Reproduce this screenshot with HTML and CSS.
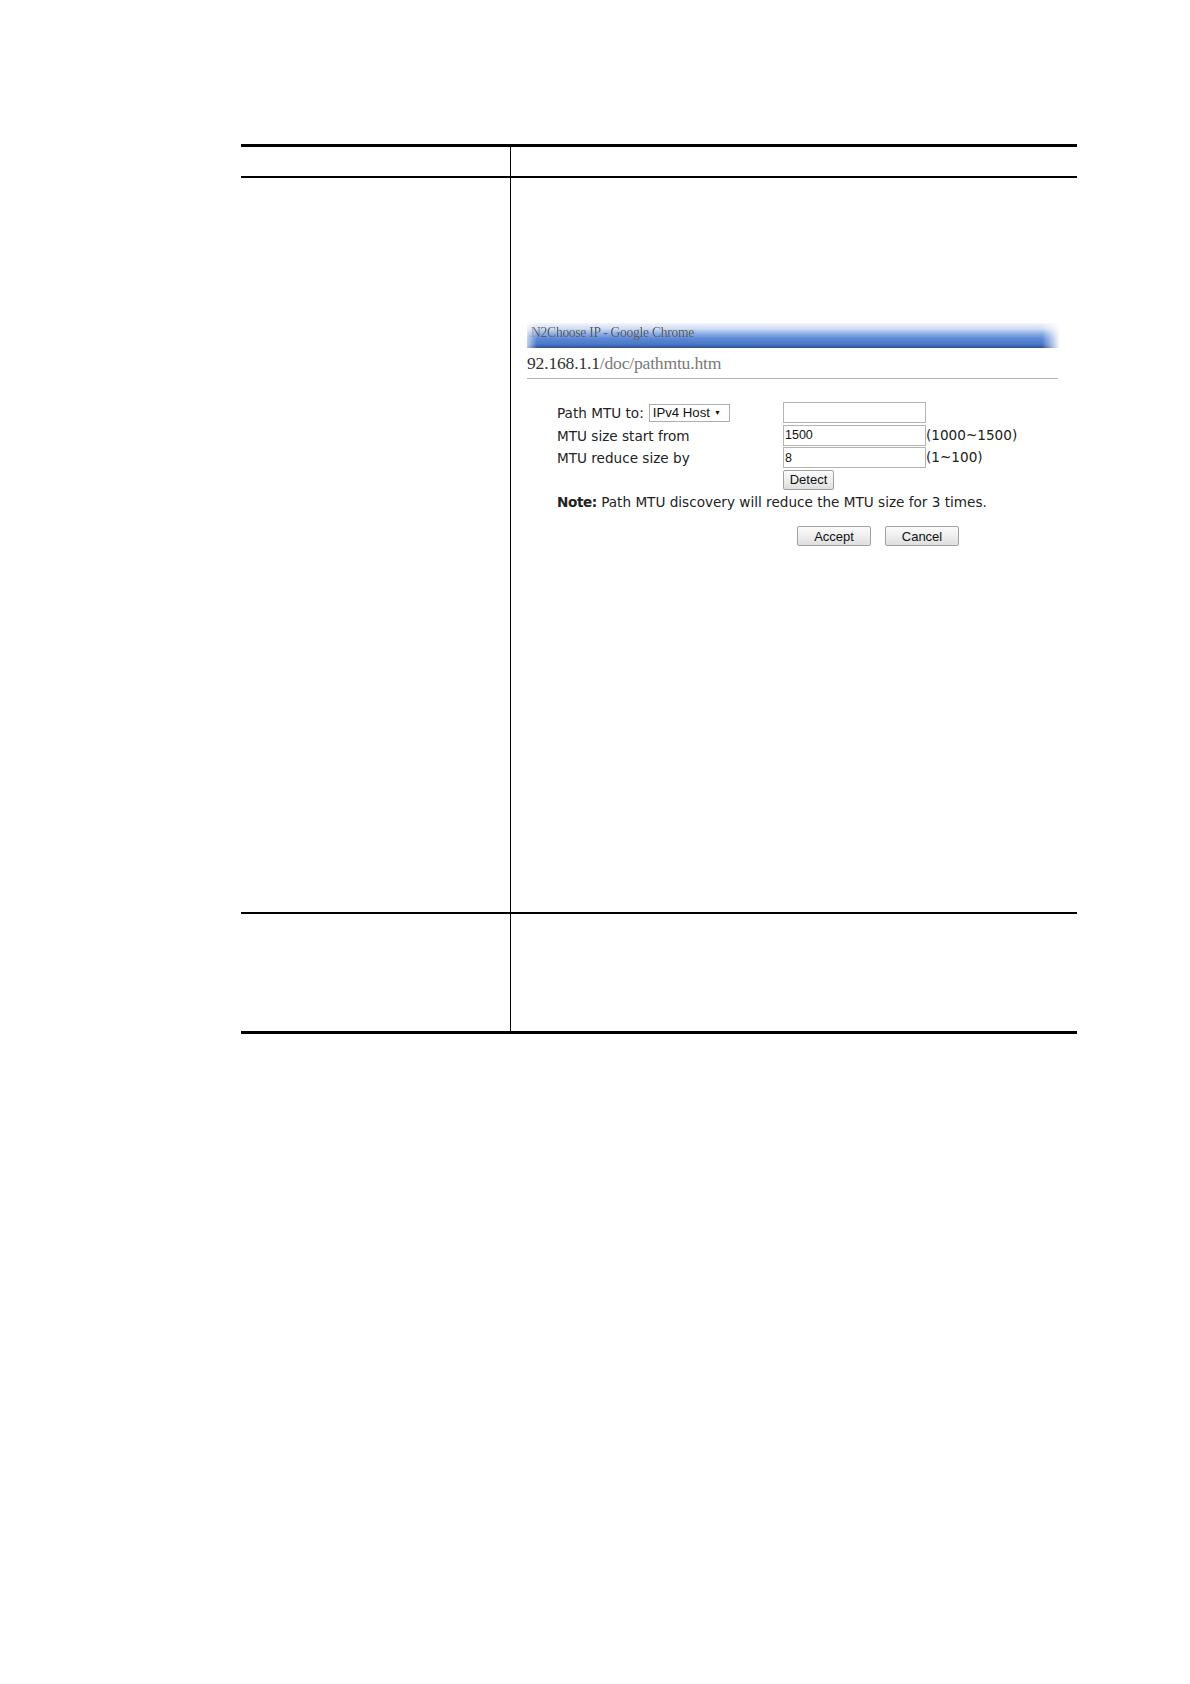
FILE: index.html
```html
<!DOCTYPE html>
<html>
<head>
<meta charset="utf-8">
<title>Path MTU</title>
<link rel="stylesheet" href="styles.css">
</head>
<body>
<div class="page">
  <div class="doc-table">
    <div class="row head">
      <div class="cell left"></div>
      <div class="cell right"></div>
    </div>
    <div class="row body1">
      <div class="cell left"></div>
      <div class="cell right">
        <div class="shot">
          <div class="titlebar"><span class="title">.N2Choose IP - Google Chrome</span></div>
          <div class="urlbar"><span class="host">92.168.1.1</span><span class="path">/doc/pathmtu.htm</span></div>
          <div class="form">
            <div class="grid">
              <div class="label">Path MTU to: <span class="select">IPv4 Host <span class="arrow">&#9660;</span></span></div>
              <div class="field"><span class="input"></span></div>
              <div class="suffix"></div>

              <div class="label">MTU size start from</div>
              <div class="field"><span class="input">1500</span></div>
              <div class="suffix">(1000~1500)</div>

              <div class="label">MTU reduce size by</div>
              <div class="field"><span class="input">8</span></div>
              <div class="suffix">(1~100)</div>

              <div class="label"></div>
              <div class="field"><span class="btn detect">Detect</span></div>
              <div class="suffix"></div>
            </div>
            <div class="note"><b>Note:</b> Path MTU discovery will reduce the MTU size for 3 times.</div>
            <div class="actions">
              <span class="btn action">Accept</span>
              <span class="btn action">Cancel</span>
            </div>
          </div>
        </div>
      </div>
    </div>
    <div class="row body2">
      <div class="cell left"></div>
      <div class="cell right"></div>
    </div>
  </div>
</div>
</body>
</html>
```

FILE: styles.css
```css
html, body {
  margin: 0;
  padding: 0;
  background: #ffffff;
}

.page {
  width: 1190px;
  min-height: 1684px;
  padding-top: 144px;
  padding-left: 241px;
  box-sizing: border-box;
}

.doc-table {
  width: 836px;
  border-top: 3px solid #000;
  border-bottom: 3px solid #000;
}

.row {
  display: grid;
  grid-template-columns: 270px 1fr;
}

.row.head {
  height: 29px;
  border-bottom: 2px solid #000;
}

.row.body1 {
  height: 734px;
  border-bottom: 2px solid #000;
}

.row.body2 {
  height: 117px;
}

.cell.left {
  border-right: 1px solid #000;
}

.cell.right {
  min-width: 0;
}

/* embedded screenshot */
.shot {
  margin-top: 145px;
  margin-left: 16px;
  width: 533px;
}

.titlebar {
  height: 25px;
  background: linear-gradient(to bottom, #f2f5fb 0%, #d3def3 22%, #8fb0e6 42%, #5d89d7 62%, #4a77c8 85%, #2f5090 100%);
  -webkit-mask-image: linear-gradient(to right, rgba(0,0,0,0.35) 0, #000 10px, #000 calc(100% - 18px), rgba(0,0,0,0) 100%);
  mask-image: linear-gradient(to right, rgba(0,0,0,0.35) 0, #000 10px, #000 calc(100% - 18px), rgba(0,0,0,0) 100%);
  display: flex;
  align-items: flex-start;
}

.title {
  font-family: "Liberation Serif", "DejaVu Serif", serif;
  font-size: 13.6px;
  letter-spacing: -0.3px;
  line-height: 14px;
  color: #5e5e5e;
  padding-top: 3px;
  padding-left: 1px;
}

.urlbar {
  height: 30px;
  border-bottom: 1px solid #b4b4b4;
  font-family: "Liberation Serif", "DejaVu Serif", serif;
  font-size: 17.6px;
  line-height: 30px;
  letter-spacing: -0.2px;
  width: 531px;
}

.host {
  color: #333;
}

.path {
  color: #7a7a7a;
}

.form {
  padding-top: 23px;
  padding-left: 30px;
  font-family: "DejaVu Sans", Verdana, sans-serif;
  font-size: 13.6px;
  color: #222;
}

.grid {
  display: grid;
  grid-template-columns: 226px 143px auto;
  grid-auto-rows: 22.5px;
}

.label {
  display: flex;
  align-items: center;
  line-height: 16px;
  white-space: nowrap;
}

.select {
  display: inline-flex;
  align-items: center;
  height: 16px;
  width: 76px;
  margin-left: 5px;
  padding-left: 3px;
  border: 1px solid #adadad;
  font-family: "Liberation Sans", Arial, sans-serif;
  font-size: 13.2px;
  color: #111;
  background: #fff;
}

.arrow {
  font-size: 7px;
  margin-left: 4px;
}

.field {
  display: flex;
  align-items: flex-start;
}

.input {
  display: flex;
  align-items: center;
  width: 141px;
  height: 19px;
  border: 1px solid #b3b3b3;
  box-sizing: content-box;
  padding-left: 1px;
  font-family: "Liberation Sans", Arial, sans-serif;
  font-size: 12.5px;
  color: #111;
  background: #fff;
}

.suffix {
  display: flex;
  align-items: center;
  padding-bottom: 2px;
  white-space: nowrap;
}

.btn {
  display: inline-flex;
  align-items: center;
  justify-content: center;
  box-sizing: border-box;
  height: 20px;
  border: 1px solid #a0a0a0;
  border-radius: 2px;
  background: linear-gradient(to bottom, #fbfbfb 0%, #ededed 55%, #dedede 100%);
  font-family: "Liberation Sans", Arial, sans-serif;
  font-size: 13px;
  color: #111;
}

.detect {
  width: 51px;
}

.note {
  margin-top: 2px;
  line-height: 16px;
  white-space: nowrap;
}

.note b {
  font-weight: bold;
  letter-spacing: -0.4px;
}

.actions {
  display: flex;
  gap: 14px;
  margin-top: 16px;
  padding-left: 240px;
}

.action {
  width: 74px;
}
```
